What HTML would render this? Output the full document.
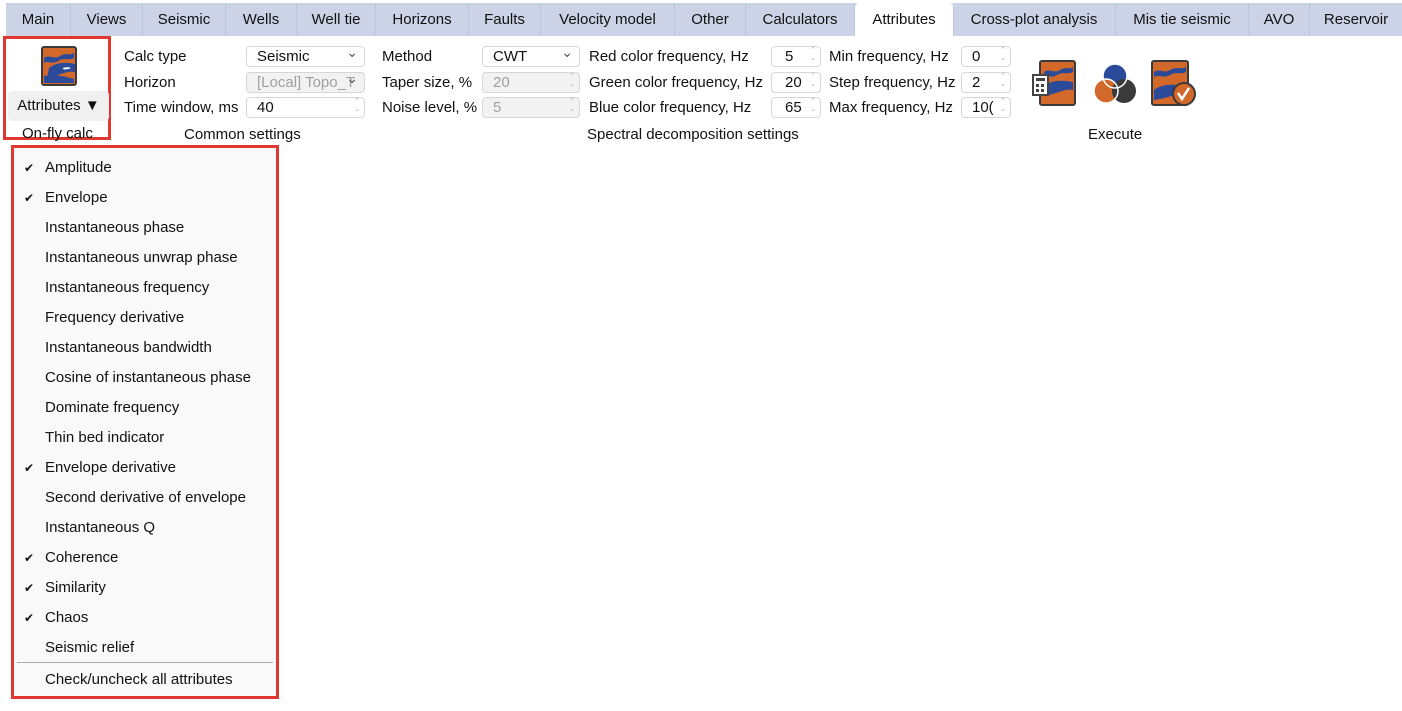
<!DOCTYPE html>
<html><head><style>
body{margin:0;width:1402px;height:711px;background:#fff;font-family:"Liberation Sans",sans-serif;font-size:15px;color:#111;position:relative;overflow:hidden}
.a{position:absolute;white-space:nowrap}
.tabs{position:absolute;left:6px;top:3px;width:1396px;height:33px;background:#cdd3e6}
.tab{position:absolute;top:3px;height:33px;line-height:33px;text-align:center;border-right:1px solid #bfc6dc}
.inp{position:absolute;height:21px;border:1px solid #d6d6d6;border-radius:4px;background:#fff;box-sizing:border-box;line-height:19px;padding-left:10px}
.dis{background:#f2f2f2;color:#a0a0a0}
.sp:after{content:"⌃\A⌄";white-space:pre;position:absolute;right:4px;top:0;font-size:7px;line-height:8px;color:#aaa}
.dd:after{content:"⌄";position:absolute;right:6px;top:-4px;font-size:14px;color:#555}
.menu{position:absolute;left:11px;top:145px;width:268px;height:554px;border:3px solid #e0372e;box-sizing:border-box;background:#f9f9f9}
.it{position:absolute;left:31px;height:30px;line-height:30px}
.ck{position:absolute;font-size:12px}
</style></head><body>
<div class="tabs"></div>
<div class="tab a" style="left:6px;width:64px">Main</div>
<div class="tab a" style="left:71px;width:71px">Views</div>
<div class="tab a" style="left:143px;width:82px">Seismic</div>
<div class="tab a" style="left:226px;width:70px">Wells</div>
<div class="tab a" style="left:297px;width:78px">Well tie</div>
<div class="tab a" style="left:376px;width:92px">Horizons</div>
<div class="tab a" style="left:469px;width:71px">Faults</div>
<div class="tab a" style="left:541px;width:133px">Velocity model</div>
<div class="tab a" style="left:675px;width:70px">Other</div>
<div class="tab a" style="left:746px;width:108px">Calculators</div>
<div class="tab a" style="left:855px;width:98px;background:#fff;border-radius:4px 4px 0 0">Attributes</div>
<div class="tab a" style="left:953px;width:162px">Cross-plot analysis</div>
<div class="tab a" style="left:1116px;width:132px">Mis tie seismic</div>
<div class="tab a" style="left:1249px;width:60px">AVO</div>
<div class="tab a" style="left:1310px;width:92px;border:none">Reservoir</div>

<div class="a" style="left:3px;top:36px;width:108px;height:104px;border:3px solid #e0372e;box-sizing:border-box"></div>
<svg class="a" style="left:41px;top:46px" width="36" height="40" viewBox="0 0 36 40"><rect x="1" y="1" width="34" height="38" rx="2" fill="#d2692a" stroke="#3a3a3a" stroke-width="2"/><path d="M3 12c6-4 10 2 16-2s10 0 14-3v5c-6 3-10-1-16 3s-10-1-14 2z M8 22c8-6 18-6 26-4v8c-8-2-16 4-28 6z M3 30c10-2 20 0 30 3v4H3z" fill="#2b4a9a"/><path d="M22 22c3-1 6-1 8 0-2 1-5 2-8 1z" fill="#fff"/></svg>
<div class="a" style="left:8px;top:91px;width:101px;height:30px;background:#f0f0f0;border-radius:4px;text-align:center;line-height:30px">Attributes ▼</div>
<div class="a" style="left:22px;top:125px">On-fly calc</div>

<div class="a" style="left:124px;top:48px">Calc type</div>
<div class="a" style="left:124px;top:74px">Horizon</div>
<div class="a" style="left:124px;top:99px">Time window, ms</div>
<div class="inp dd" style="left:246px;top:46px;width:119px">Seismic</div>
<div class="inp dis dd" style="left:246px;top:72px;width:119px">[Local] Topo_T</div>
<div class="inp sp" style="left:246px;top:97px;width:119px">40</div>
<div class="a" style="left:184px;top:126px">Common settings</div>

<div class="a" style="left:382px;top:48px">Method</div>
<div class="a" style="left:382px;top:74px">Taper size, %</div>
<div class="a" style="left:382px;top:99px">Noise level, %</div>
<div class="inp dd" style="left:482px;top:46px;width:98px">CWT</div>
<div class="inp dis sp" style="left:482px;top:72px;width:98px">20</div>
<div class="inp dis sp" style="left:482px;top:97px;width:98px">5</div>

<div class="a" style="left:589px;top:48px">Red color frequency, Hz</div>
<div class="a" style="left:589px;top:74px">Green color frequency, Hz</div>
<div class="a" style="left:589px;top:99px">Blue color frequency, Hz</div>
<div class="inp sp" style="left:771px;top:46px;width:50px;padding-left:13px">5</div>
<div class="inp sp" style="left:771px;top:72px;width:50px;padding-left:13px">20</div>
<div class="inp sp" style="left:771px;top:97px;width:50px;padding-left:13px">65</div>
<div class="a" style="left:587px;top:126px">Spectral decomposition settings</div>

<div class="a" style="left:829px;top:48px">Min frequency, Hz</div>
<div class="a" style="left:829px;top:74px">Step frequency, Hz</div>
<div class="a" style="left:829px;top:99px">Max frequency, Hz</div>
<div class="inp sp" style="left:961px;top:46px;width:50px">0</div>
<div class="inp sp" style="left:961px;top:72px;width:50px">2</div>
<div class="inp sp" style="left:961px;top:97px;width:50px">10(</div>

<svg class="a" style="left:1032px;top:60px" width="46" height="46" viewBox="0 0 46 46"><rect x="8" y="1" width="35" height="44" rx="2" fill="#d2692a" stroke="#3a3a3a" stroke-width="2"/><path d="M12 12c6-4 10 2 16-2s10 0 13-3v5c-6 3-10-1-16 3s-8-1-13 2z M12 26c8-6 18-6 29-4v8c-8-2-16 4-29 6z" fill="#2b4a9a"/><rect x="1" y="15" width="15" height="20" fill="#fff" stroke="#444" stroke-width="2"/><rect x="4" y="18" width="9" height="3" fill="#444"/><path d="M4 24h3v3H4zM9 24h3v3H9zM4 29h3v3H4zM9 29h3v3H9z" fill="#444"/></svg>
<svg class="a" style="left:1092px;top:62px" width="46" height="44" viewBox="0 0 46 44"><circle cx="23" cy="14" r="12" fill="#2b4a9a"/><circle cx="14" cy="29" r="12" fill="#d2692a"/><circle cx="32" cy="29" r="12" fill="#3a3a3a"/><circle cx="23" cy="14" r="12" fill="none" stroke="#fff" stroke-width="1.5"/><circle cx="14" cy="29" r="12" fill="none" stroke="#fff" stroke-width="1.5"/></svg>
<svg class="a" style="left:1150px;top:60px" width="48" height="48" viewBox="0 0 48 48"><rect x="2" y="1" width="36" height="44" rx="2" fill="#d2692a" stroke="#3a3a3a" stroke-width="2"/><path d="M4 12c6-4 10 2 16-2s10 0 16-3v5c-6 3-10-1-16 3s-10-1-16 2z M4 30c8-6 18-6 32-4v8c-8-2-16 4-32 6z" fill="#2b4a9a"/><circle cx="34" cy="34" r="11" fill="#d2692a" stroke="#3a3a3a" stroke-width="2"/><path d="M28 33l4 6 7-11" fill="none" stroke="#fff" stroke-width="2.5"/></svg>
<div class="a" style="left:1088px;top:126px">Execute</div>

<div class="menu">
<div class="it" style="top:5px"><span class="ck" style="left:-21px">✔</span>Amplitude</div>
<div class="it" style="top:35px"><span class="ck" style="left:-21px">✔</span>Envelope</div>
<div class="it" style="top:65px">Instantaneous phase</div>
<div class="it" style="top:95px">Instantaneous unwrap phase</div>
<div class="it" style="top:125px">Instantaneous frequency</div>
<div class="it" style="top:155px">Frequency derivative</div>
<div class="it" style="top:185px">Instantaneous bandwidth</div>
<div class="it" style="top:215px">Cosine of instantaneous phase</div>
<div class="it" style="top:245px">Dominate frequency</div>
<div class="it" style="top:275px">Thin bed indicator</div>
<div class="it" style="top:305px"><span class="ck" style="left:-21px">✔</span>Envelope derivative</div>
<div class="it" style="top:335px">Second derivative of envelope</div>
<div class="it" style="top:365px">Instantaneous Q</div>
<div class="it" style="top:395px"><span class="ck" style="left:-21px">✔</span>Coherence</div>
<div class="it" style="top:425px"><span class="ck" style="left:-21px">✔</span>Similarity</div>
<div class="it" style="top:455px"><span class="ck" style="left:-21px">✔</span>Chaos</div>
<div class="it" style="top:485px">Seismic relief</div>
<div class="a" style="left:3px;top:514px;width:256px;height:1px;background:#aaa"></div>
<div class="it" style="top:517px">Check/uncheck all attributes</div>
</div>
</body></html>
